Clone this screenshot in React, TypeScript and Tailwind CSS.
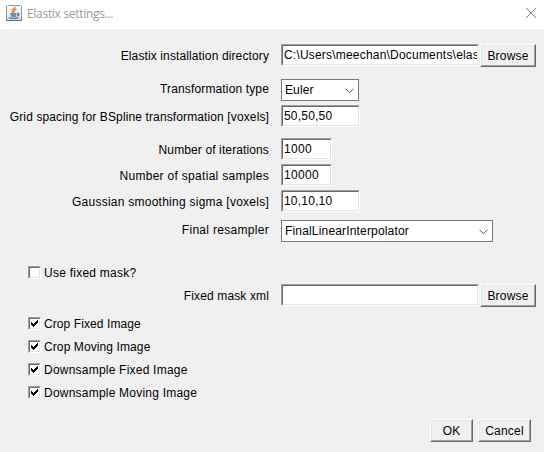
import React from "react";

const sunken =
  "box-border h-[22px] bg-white border border-t-[#a0a0a0] border-l-[#a0a0a0] border-r-white border-b-white";
const sunkenInner =
  "h-full w-full overflow-hidden border border-t-[#696969] border-l-[#696969] border-r-[#e3e3e3] border-b-[#e3e3e3] pl-px leading-[18px] whitespace-nowrap";

function Field({ width, spacing = "", children }: { width: string; spacing?: string; children?: React.ReactNode }) {
  return (
    <div className={`${sunken} ${width} shrink-0`}>
      <div className={`${sunkenInner} ${spacing}`}>{children}</div>
    </div>
  );
}

function Choice({ width, spacing = "", children }: { width: string; spacing?: string; children: React.ReactNode }) {
  return (
    <div className={`${width} flex h-[22px] shrink-0 items-center justify-between border border-[#7a7a7a] bg-white pr-[4px] pl-[3px]`}>
      <span className={`leading-[20px] whitespace-nowrap ${spacing}`}>{children}</span>
      <svg width="9" height="6" viewBox="0 0 9 6" className="mt-[2px]" fill="none" stroke="#505050">
        <path d="M0.5 0.7 4.5 4.7 8.5 0.7" />
      </svg>
    </div>
  );
}

function Button({ width, children }: { width: string; children: React.ReactNode }) {
  return (
    <button className={`${width} h-[23px] shrink-0 border border-t-white border-l-white border-r-[#696969] border-b-[#696969] bg-[#f0f0f0]`}>
      <span className="flex h-full w-full items-center justify-center border border-t-[#e3e3e3] border-l-[#e3e3e3] border-r-[#a0a0a0] border-b-[#a0a0a0] leading-[14px] tracking-[0.2px]">
        {children}
      </span>
    </button>
  );
}

function Row({ label, spacing, top, leading = "leading-[24px]", children }: { label: string; spacing: string; top: string; leading?: string; children: React.ReactNode }) {
  return (
    <div className={`flex h-[22px] ${top}`}>
      <div className={`mr-[12px] w-[269px] shrink-0 text-right whitespace-nowrap ${leading}`}>
        <span className={spacing}>{label}</span>
      </div>
      {children}
    </div>
  );
}

function Check({ label, checked, spacing, top }: { label: string; checked?: boolean; spacing: string; top: string }) {
  return (
    <div className={`flex h-[13px] pl-[28px] ${top}`}>
      <div className="h-[13px] w-[13px] shrink-0 border border-t-[#a0a0a0] border-l-[#a0a0a0] border-r-white border-b-white bg-white">
        <div className="h-full w-full border border-t-[#696969] border-l-[#696969] border-r-[#e3e3e3] border-b-[#e3e3e3]">
          {checked && (
            <svg width="9" height="9" viewBox="0 0 9 9" shapeRendering="crispEdges">
              <path d="M1 3h1v1h1v1h1v-1h1v-1h1v-1h1v-1h1v3h-1v1h-1v1h-1v1h-1v1h-1v-1h-1v-1h-1z" />
            </svg>
          )}
        </div>
      </div>
      <span className={`ml-[3px] leading-[14px] whitespace-nowrap ${spacing}`}>{label}</span>
    </div>
  );
}

export default function App() {
  return (
    <div className="h-[452px] w-[544px] overflow-hidden bg-[#f0f0f0] font-['Liberation_Sans',Arial,sans-serif] text-[12px] text-black">
      <header className="flex h-[29px] items-center bg-white pl-[6px]">
        <svg width="16" height="16" viewBox="0 0 16 16" className="mt-[-3px] shrink-0">
          <defs>
            <linearGradient id="tile" x1="0" y1="0" x2="0" y2="1">
              <stop offset="0" stopColor="#fff" />
              <stop offset="1" stopColor="#d5dee6" />
            </linearGradient>
          </defs>
          <rect x="0.5" y="0.5" width="15" height="15" rx="1" fill="url(#tile)" stroke="#8299ad" />
          <path d="M0.5 14V15.5H15.5V14" fill="none" stroke="#4c6c88" />
          <path d="M9 1.8C9.5 3.8 5.4 4.3 6.2 6.3L7.6 8.2M10.4 4C8.2 4.9 7.4 5.8 8.6 7.3" fill="none" stroke="#ee832b" strokeWidth="1.5" />
          <path d="M4.2 9H10.4M5 11H10.2M11 8.5C13.7 8.2 13.3 10.3 11 11M3 12.4C2.8 13.7 11 13.7 12.4 12.4" fill="none" stroke="#4f7491" strokeWidth="1.3" />
        </svg>
        <span className="mt-[-1px] ml-[5px] grow font-['Open_Sans','Noto_Sans',sans-serif] text-[12px] tracking-[-0.3px] text-[#999]">Elastix settings...</span>
        <svg width="10" height="10" viewBox="0 0 10 10" className="mt-[-3px] mr-[8px]" stroke="#808080" strokeWidth="1">
          <path d="M0 0 10 10M10 0 0 10" />
        </svg>
      </header>
      <main>
        <Row label="Elastix installation directory" spacing="tracking-[0.12px]" top="mt-[15px]">
          <Field width="w-[198px]" spacing="tracking-[0.2px]">C:\Users\meechan\Documents\elas</Field>
          <div className="ml-px flex">
            <Button width="w-[56px]">Browse</Button>
          </div>
        </Row>
        <Row label="Transformation type" spacing="tracking-[0.14px]" top="mt-[13px]" leading="leading-[20px]">
          <Choice width="w-[78px]" spacing="tracking-[0.1px]">Euler</Choice>
        </Row>
        <Row label="Grid spacing for BSpline transformation [voxels]" spacing="tracking-[0.12px]" top="mt-[4px]">
          <Field width="w-[79px]" spacing="tracking-[0.2px]">50,50,50</Field>
        </Row>
        <Row label="Number of iterations" spacing="tracking-[0.12px]" top="mt-[11px]">
          <Field width="w-[51px]" spacing="tracking-[0.3px]">1000</Field>
        </Row>
        <Row label="Number of spatial samples" spacing="tracking-[0.3px]" top="mt-[4px]">
          <Field width="w-[51px]" spacing="tracking-[0.3px]">10000</Field>
        </Row>
        <Row label="Gaussian smoothing sigma [voxels]" spacing="tracking-[0.25px]" top="mt-[4px]">
          <Field width="w-[79px]" spacing="tracking-[0.2px]">10,10,10</Field>
        </Row>
        <Row label="Final resampler" spacing="tracking-[0.3px]" top="mt-[8px]" leading="leading-[20px]">
          <Choice width="w-[212px]" spacing="tracking-[0.17px]">FinalLinearInterpolator</Choice>
        </Row>
        <Check label="Use fixed mask?" spacing="tracking-[0.25px]" top="mt-[24px]" />
        <Row label="Fixed mask xml" spacing="tracking-[0.13px]" top="mt-[5px]">
          <Field width="w-[198px]" />
          <div className="ml-px flex">
            <Button width="w-[56px]">Browse</Button>
          </div>
        </Row>
        <Check label="Crop Fixed Image" checked spacing="tracking-[0.09px]" top="mt-[11px]" />
        <Check label="Crop Moving Image" checked spacing="tracking-[0.1px]" top="mt-[10px]" />
        <Check label="Downsample Fixed Image" checked spacing="tracking-[0.22px]" top="mt-[10px]" />
        <Check label="Downsample Moving Image" checked spacing="tracking-[0.22px]" top="mt-[10px]" />
        <footer className="mt-[20px] flex justify-end gap-[5px] pr-[13px]">
          <Button width="w-[43px]">OK</Button>
          <Button width="w-[53px]">Cancel</Button>
        </footer>
      </main>
    </div>
  );
}
